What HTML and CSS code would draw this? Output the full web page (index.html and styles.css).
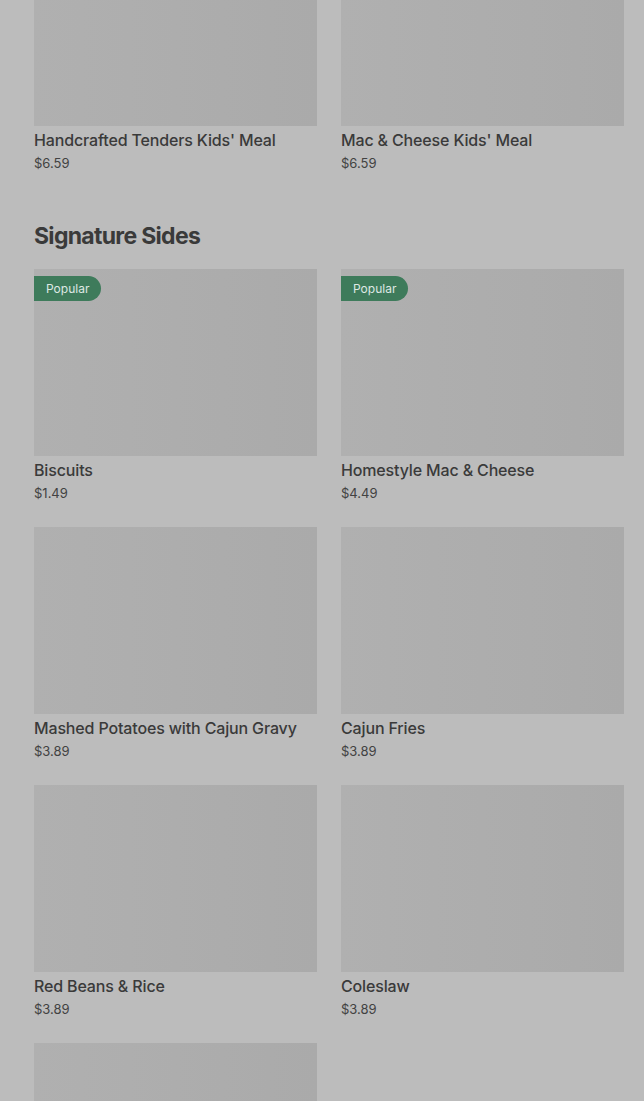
FILE: index.html
```html
<!DOCTYPE html>
<html>
<head>
<meta charset="utf-8">
<link rel="stylesheet" href="styles.css">
</head>
<body>
<div class="page">
  <section class="section first">
    <div class="grid">
      <div class="card"><div class="img"></div><div class="title">Handcrafted Tenders Kids' Meal</div><div class="price">$6.59</div></div>
      <div class="card"><div class="img"></div><div class="title">Mac &amp; Cheese Kids' Meal</div><div class="price">$6.59</div></div>
    </div>
  </section>
  <section class="section">
    <h2 class="heading">Signature Sides</h2>
    <div class="grid">
      <div class="card"><div class="img"><span class="badge">Popular</span></div><div class="title">Biscuits</div><div class="price">$1.49</div></div>
      <div class="card"><div class="img"><span class="badge">Popular</span></div><div class="title">Homestyle Mac &amp; Cheese</div><div class="price">$4.49</div></div>
      <div class="card"><div class="img"></div><div class="title">Mashed Potatoes with Cajun Gravy</div><div class="price">$3.89</div></div>
      <div class="card"><div class="img"></div><div class="title">Cajun Fries</div><div class="price">$3.89</div></div>
      <div class="card"><div class="img"></div><div class="title">Red Beans &amp; Rice</div><div class="price">$3.89</div></div>
      <div class="card"><div class="img"></div><div class="title">Coleslaw</div><div class="price">$3.89</div></div>
      <div class="card"><div class="img"></div></div>
    </div>
  </section>
</div>
</body>
</html>
```

FILE: styles.css
```css
html, body {
  margin: 0;
  padding: 0;
  background: #bcbcbc;
  overflow: hidden;
}
.page {
  padding: 0 20px 0 34px;
  font-family: Inter, "Noto Sans", sans-serif;
  color: #3a3a3a;
}
.section.first {
  margin-top: -61px;
}
.grid {
  display: grid;
  grid-template-columns: 283px 283px;
  column-gap: 24px;
  row-gap: 25px;
}
.card {
  display: flex;
  flex-direction: column;
}
.img {
  position: relative;
  height: 187px;
  background: linear-gradient(90deg, #b0b0b0 0%, #adadad 50%, #aaaaaa 100%);
}
.badge {
  position: absolute;
  top: 7px;
  left: 0;
  height: 25px;
  line-height: 25px;
  padding: 0 12px;
  background: #3e7b5b;
  color: #dfe8e3;
  font-size: 12px;
  border-radius: 0 13px 13px 0;
}
.title {
  margin-top: 4px;
  font-size: 16px;
  line-height: 20px;
  font-weight: 500;
  letter-spacing: -0.15px;
  color: #3a3a3a;
}
.price {
  margin-top: 4px;
  font-size: 13px;
  line-height: 18px;
  color: #424242;
}
.heading {
  margin: 48px 0 17px;
  font-size: 23px;
  line-height: 32px;
  font-weight: 700;
  letter-spacing: -0.7px;
  color: #3a3a3a;
}
```
